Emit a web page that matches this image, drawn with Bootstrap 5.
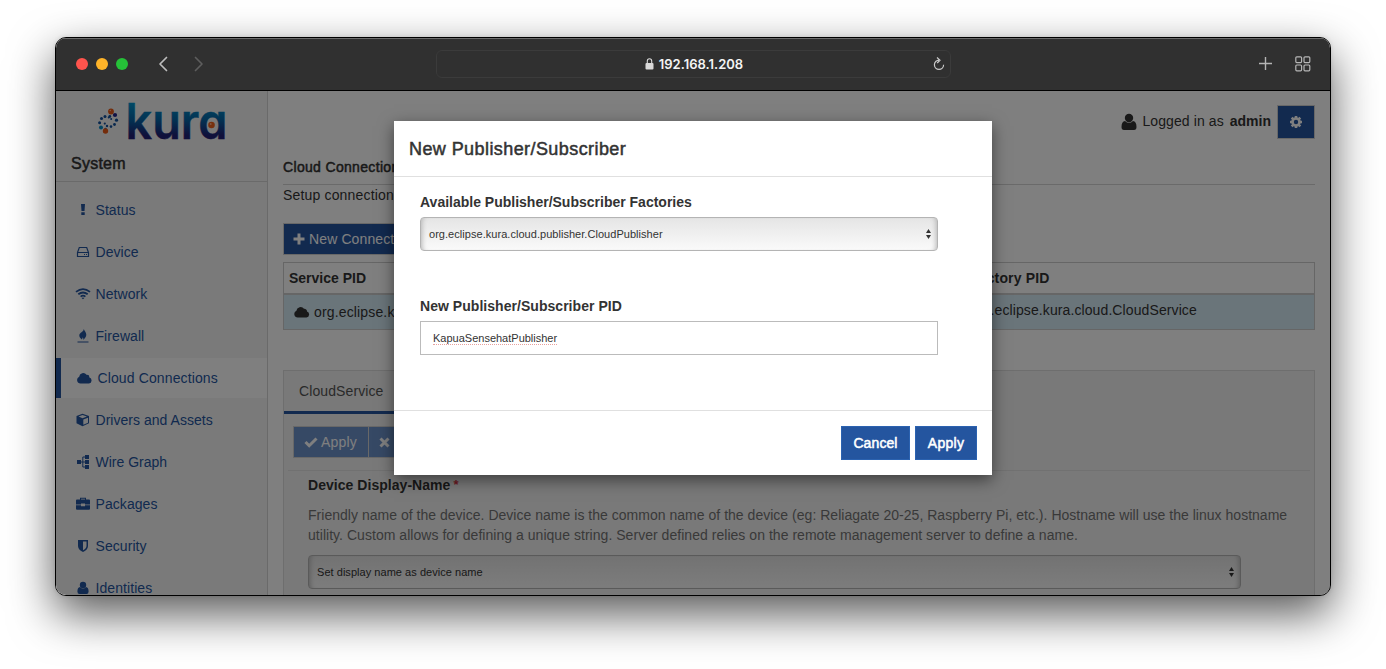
<!DOCTYPE html>
<html lang="en">
<head>
<meta charset="utf-8">
<meta name="viewport" content="width=device-width, initial-scale=1">
<title>Kura - Cloud Connections</title>
<link href="https://cdn.jsdelivr.net/npm/bootstrap@5.3.0/dist/css/bootstrap.min.css" rel="stylesheet">
<style>
  :root { --kura-blue: #24559f; }
  body { background: #fff; font: 14px/20px "Liberation Sans", Arial, sans-serif; color: #333; height: 669px; overflow: hidden; padding: 37px 55px; }
  svg { display: block; flex: none; }
  .medium { -webkit-text-stroke: .5px currentColor; }
  .window { height: 559px; border: 1px solid #000; border-radius: 11px; overflow: hidden; background: #fff; box-shadow: 0 18px 46px rgba(0,0,0,.66), 0 0 4px rgba(0,0,0,.12); }
  .titlebar { height: 53px; background: #303030; border-bottom: 1px solid #000; box-shadow: inset 0 1px 0 #6c6c6c; padding: 0 19px 0 20px; }
  .dot { width: 12px; height: 12px; }
  .address { width: 515px; height: 28px; border: 1px solid #3b3b3b; border-radius: 6px; color: #f4f4f4; font: 600 13px/26px Inter, sans-serif; }
  .app { height: 504px; }
  .sidebar { width: 212px; background: #f4f4f4; border-right: 1px solid #d5d5d5; }
  .brand { height: 91px; border-bottom: 1px solid #d5d5d5; }
  .brand h2 { font-size: 16px; line-height: 24px; letter-spacing: .25px; padding-left: 15px; }
  .side-link { height: 40px; margin-bottom: 2px; color: var(--kura-blue); padding-left: 20px; gap: 5.5px; letter-spacing: .07px; }
  .side-link.active { background: #fff; border-left: 5px solid var(--kura-blue); padding-left: 16px; letter-spacing: .12px; }
  .content-area { padding: 14px 15px 0; min-width: 0; }
  .kbtn { background: var(--kura-blue); color: #fff; border: 1px solid #d0d0d0; border-radius: 0; font-size: 14px; line-height: 20px; padding: 0 10px; }
  .kbtn:hover { background: #1c467f; color: #fff; }
  .rule { border-bottom: 1px solid #d5d5d5; }
  .pid-table { border: 1px solid #ccc; height: 68px; }
  .pid-table .thead-row { height: 32px; border-bottom: 2px solid #ccc; font-weight: 700; }
  .pid-table .trow { height: 34px; background: #d5eaf5; }
  .pid-col { width: 685px; padding-left: 5px; }
  .panel { border: 1px solid #ddd; border-bottom: 0; background: #f2f2f2; height: 226px; }
  .tab-item { height: 43px; width: 117px; border-bottom: 3px solid var(--kura-blue); padding: 10px 15px; color: #555; letter-spacing: .1px; }
  .kselect { height: 34px; border: 1px solid #b4b4b4; border-radius: 4px; font-size: 11px; background: linear-gradient(#e5e5e5, #fafafa); box-shadow: inset 5px 0 5px -4px #b5b5b5, inset -5px 0 5px -4px #b5b5b5; padding: 0 5px 0 8px; color: #333; letter-spacing: .04px; }
  .dim { background: rgba(0,0,0,.5); inset: 0; }
  .dialog { width: 598px; height: 354px; left: 338px; top: 30px; background: #fff; box-shadow: 0 5px 15px rgba(0,0,0,.5); }
  .dialog header { height: 56px; border-bottom: 1px solid #e0e0e0; padding: 18px 15px; font-size: 18px; letter-spacing: .42px; }
  .dialog main { height: 233px; padding: 15px 54px 0 26px; }
  .dialog label { line-height: 20px; font-weight: 700; }
  .dialog footer { height: 65px; border-top: 1px solid #e0e0e0; padding: 15px; gap: 5px; }
  .dialog .kbtn { height: 34px; border-color: #2b62b0; padding: 0; }
  .pid-field { height: 34px; border: 1px solid #bbb; font-size: 11px; padding: 0 12px; color: #333; }
  .spell { border-bottom: 1px dotted #e7a3a0; line-height: 12px; }
</style>
</head>
<body>
<div class="window">
  <div class="titlebar d-flex align-items-center justify-content-between">
    <div class="d-flex align-items-center" style="width:360px">
      <span class="dot rounded-circle me-2" style="background:#ff544d"></span>
      <span class="dot rounded-circle me-2" style="background:#ffb429"></span>
      <span class="dot rounded-circle" style="background:#25c138"></span>
      <svg class="ms-4" width="60" height="18" fill="none" stroke-width="1.700" stroke-linecap="round" stroke-linejoin="round"><path d="M20 2.500 13.500 9l6.500 6.500" transform="translate(-5.500)" stroke="#bdbdbd"/><path d="m48.500 2.500 6.500 6.500-6.500 6.500" transform="translate(-5)" stroke="#5d5d5d"/></svg>
    </div>
    <div class="address d-flex align-items-center ps-1">
      <span class="flex-grow-1 d-flex justify-content-center align-items-center" style="padding-left:14px;gap:5px">
        <svg width="9" height="12" viewBox="0 0 9 12"><rect x=".5" y="5" width="8" height="6.500" rx="1" fill="#d9d9d9"/><path d="M2.300 5V3a2.200 2.200 0 0 1 4.400 0v2" fill="none" stroke="#d9d9d9" stroke-width="1.100"/></svg>192.168.1.208
      </span>
      <svg width="12" height="14" viewBox="0 0 12 14" style="margin-right:5px" fill="none" stroke="#c9c9c9" stroke-width="1.200"><path d="M6 3.200A4.600 4.600 0 1 0 10.600 7.800M4 .5l3 2.700-2.800 2.800"/></svg>
    </div>
    <div class="d-flex align-items-center justify-content-end" style="width:360px;gap:22px;padding-bottom:1px">
      <svg width="15" height="15" stroke="#b5b5b5" stroke-width="1.400"><path d="M7.500 1v13M1 7.500h13"/></svg>
      <svg width="16" height="16" fill="none" stroke="#b5b5b5" stroke-width="1.200"><rect x=".8" y=".8" width="5.800" height="5.800" rx="1"/><rect x="9" y=".8" width="5.800" height="5.800" rx="1"/><rect x=".8" y="9" width="5.800" height="5.800" rx="1"/><rect x="9" y="9" width="5.800" height="5.800" rx="1"/></svg>
    </div>
  </div>

  <div class="app d-flex position-relative overflow-hidden">
    <nav class="sidebar flex-shrink-0">
      <div class="brand">
        <svg width="180" height="61" viewBox="56 91 180 61" role="img" aria-label="kura">
          <defs><linearGradient id="kg" gradientUnits="userSpaceOnUse" x1="0" y1="101" x2="0" y2="139"><stop offset="0" stop-color="#0098d0"/><stop offset=".5" stop-color="#0664a5"/><stop offset=".9" stop-color="#202176"/></linearGradient></defs>
          <g fill="#12509c"><circle cx="115" cy="115" r="2.100" fill="#24248a"/><circle cx="109.800" cy="116.500" r="1.400"/><circle cx="105" cy="116.500" r="1.500"/><circle cx="101.500" cy="118.500" r="1.500"/><circle cx="99.600" cy="122.800" r="1.500"/><circle cx="101" cy="127.500" r="2" fill="#0789c4"/><circle cx="104.800" cy="123.600" r="1.100"/><circle cx="107" cy="126" r="1.200"/><circle cx="111" cy="126.600" r="1.300"/><circle cx="114.500" cy="124.500" r="1.400"/><circle cx="116.500" cy="120.200" r="1.600"/><circle cx="108.700" cy="117.500" r="1"/><circle cx="111.200" cy="119" r="1"/><circle cx="105.500" cy="129" r="1.200"/></g>
          <g fill="#e95a18"><circle cx="111" cy="111.500" r="2.900"/><circle cx="105.500" cy="131" r="2.700"/><circle cx="110.300" cy="110.500" r=".8" fill="#ffb08a"/></g>
          <text x="125.500" y="139" font-family="Inter, sans-serif" font-weight="600" font-size="49" textLength="102" lengthAdjust="spacingAndGlyphs" style="font-feature-settings:'cv11'" fill="url(#kg)" stroke="url(#kg)" stroke-width=".4">kura</text>
          <circle cx="211.500" cy="125" r="3.300" fill="#ee601c"/><circle cx="210.700" cy="124" r=".9" fill="#ffb08a"/>
        </svg>
        <h2 class="medium mb-0">System</h2>
      </div>
      <div class="pt-2">
        <a class="side-link d-flex align-items-center text-decoration-none"><svg width="14" height="14" fill="currentColor"><path d="M5 1h4l-.5 7h-3zM5.300 9.300h3.400V12H5.300z"/></svg>Status</a>
        <a class="side-link d-flex align-items-center text-decoration-none"><svg width="14" height="14" fill="none" stroke="currentColor" stroke-width="1.200"><path d="M1.500 7.500 3.300 2.500h7.400l1.800 5v4h-11zM1.500 7.500h11"/><path d="M8 9.500h1M10 9.500h1"/></svg>Device</a>
        <a class="side-link d-flex align-items-center text-decoration-none"><svg width="14" height="14" viewBox="0 0 14 14" overflow="visible" fill="none" stroke="currentColor" stroke-width="1.800"><path d="M0 4.900q7-5.600 14 0M2.300 7.300q4.700-3.600 9.400 0M4.600 9.600q2.400-1.800 4.800 0"/><path d="m5.600 10.900 1.400 1.400 1.400-1.400q-1.400-1-2.800 0z" fill="currentColor" stroke="none"/></svg>Network</a>
        <a class="side-link d-flex align-items-center text-decoration-none"><svg width="14" height="14" fill="currentColor"><path d="M7.800 0c.4 2 2.500 3 2.500 5.800 0 2.300-1.500 3.400-3 5.200.3-1.500-.2-2.200-.9-2.500.1 1-.2 1.500-.5 2C4.400 9.200 3 8 3.300 6 3.700 3.500 7.500 3.100 7.800 0zM1.500 12.500h11v1h-11z"/></svg>Firewall</a>
        <a class="side-link active d-flex align-items-center text-decoration-none"><svg width="15" height="14" fill="currentColor"><path d="M3.500 12.500a3.500 3.500 0 0 1-1.300-6.700A4 4 0 0 1 9.500 3.800 2.600 2.600 0 0 1 12.400 6.500 3.100 3.100 0 0 1 12 12.500z"/></svg>Cloud Connections</a>
        <a class="side-link d-flex align-items-center text-decoration-none" style="letter-spacing:.03px"><svg width="14" height="14"><path d="M6.500.8l6.500 2.300v7.200l-6.500 3-6-3V3.100z" fill="currentColor"/><path d="m2.500 3.600 4-1.700 4.500 1.700-4.500 1.700zM7.300 6.500l4.700-1.700v4.900l-4.700 2z" fill="#f4f4f4"/></svg>Drivers and Assets</a>
        <a class="side-link d-flex align-items-center text-decoration-none" style="letter-spacing:0"><svg width="14" height="14" fill="currentColor"><path d="M1 5h4v4H1zM9 0h4v4H9zM9 5h4v4H9zM9 10h4v4H9z"/><path d="M5 7h4M9 2H6.800v10H9" stroke="currentColor" fill="none"/></svg>Wire Graph</a>
        <a class="side-link d-flex align-items-center text-decoration-none"><svg width="14" height="14" fill="currentColor"><path d="M4 2.500V.8h6v1.700h3q1 0 1 1V7.500H9v-1H5v1H0v-4q0-1 1-1zM5 2.500h4v-.7H5zM0 8.200h5v1.100h4V8.200h5v3.500q0 1-1 1H1q-1 0-1-1z" fill-rule="evenodd"/></svg>Packages</a>
        <a class="side-link d-flex align-items-center text-decoration-none"><svg width="14" height="14"><path d="M2 1h10v6c0 3-2.500 4.800-5 6-2.500-1.200-5-3-5-6z" fill="currentColor"/><path d="M7 2.500h3.500V7c0 2-1.700 3.300-3.500 4.300z" fill="#f4f4f4"/></svg>Security</a>
        <a class="side-link d-flex align-items-center text-decoration-none"><svg width="14" height="14" fill="currentColor"><circle cx="7" cy="4" r="3.200"/><path d="M4 6q3 3 6 0 2.600.3 2.600 4.500Q12.600 13 10.500 13h-7Q1.400 13 1.400 10.500 1.400 6.300 4 6z"/></svg>Identities</a>
      </div>
    </nav>

    <section class="content-area flex-grow-1">
      <div class="d-flex justify-content-end align-items-center" style="height:34px">
        <svg width="16" height="18" class="me-1" viewBox="0 0 16 18" fill="#333"><circle cx="8" cy="5" r="4.200"/><path d="M4 8q4 3.700 8 0 3.500.4 3.500 6 0 3-2.500 3H3q-2.500 0-2.500-3Q.5 8.400 4 8z"/></svg>
        <span style="letter-spacing:.1px;margin:-2px 0 0 1px">Logged in as</span><strong style="margin:-2px 0 0 6px">admin</strong>
        <button class="kbtn h-100" aria-label="Settings" style="width:38px;padding:0 11px;margin-left:6px"><svg width="14" height="14" viewBox="0 0 14 14"><circle cx="7" cy="7" r="3.500" fill="none" stroke="#fff" stroke-width="2.600"/><path d="M7 1v2M7 11v2M1 7h2M11 7h2M2.700 2.700l1.500 1.500M9.800 9.800l1.500 1.500M11.300 2.700 9.800 4.200M4.200 9.800l-1.500 1.500" stroke="#fff" stroke-width="2.600"/></svg></button>
      </div>
      <div class="medium rule" style="margin-top:18px;height:28px;letter-spacing:.33px">Cloud Connections</div>
      <div style="height:38px;letter-spacing:.17px">Setup connections</div>
      <button class="kbtn d-flex align-items-center" style="height:32px;gap:4px;padding-left:9px;letter-spacing:.12px"><svg width="12" height="12"><path d="M4.500.5h3v4h4v3h-4v4h-3v-4h-4v-3h4z" fill="#fff"/></svg>New Connection</button>
      <div class="pid-table" style="margin-top:7px">
        <div class="thead-row d-flex align-items-center"><span class="pid-col">Service PID</span><span style="letter-spacing:.15px;padding-left:1px">Factory PID</span></div>
        <div class="trow d-flex align-items-center">
          <span class="pid-col d-flex align-items-center" style="gap:4px;padding-left:10px;letter-spacing:.15px"><svg width="16" height="14" fill="#333"><path d="M3.700 12.500a3.500 3.500 0 0 1-1.300-6.700A4.200 4.200 0 0 1 10 3.800 2.600 2.600 0 0 1 13 6.500a3.100 3.100 0 0 1-.5 6z"/></svg>org.eclipse.kura</span>
          <span style="letter-spacing:.1px;padding:0 0 4px 1px">org.eclipse.kura.cloud.CloudService</span>
        </div>
      </div>
      <div class="panel" style="margin-top:40px">
        <div class="tab-item">CloudService</div>
        <div class="d-flex rule" style="margin:12px 4px 0;padding:0 5px 12px;border-color:#e2e2e2">
          <button class="kbtn d-flex align-items-center" style="width:76px;height:32px;gap:3px;background:#6d92cb;letter-spacing:.2px"><svg width="14" height="14"><path d="m1.500 7 3.700 3.700L12.500 3.500" fill="none" stroke="#fff" stroke-width="3"/></svg>Apply</button>
          <button class="kbtn d-flex align-items-center" style="height:32px;margin-left:-1px;gap:5px;background:#6d92cb"><svg width="11" height="12"><path d="m1.500 2.500 8 8m0-8-8 8" stroke="#fff" stroke-width="3"/></svg>Reset</button>
        </div>
        <div style="padding:4px 24px 0">
          <div class="d-flex"><strong style="letter-spacing:.04px">Device Display-Name</strong><span class="text-danger fw-bold" style="font-size:13px;line-height:20px;padding-left:3px">*</span></div>
          <div class="text-nowrap" style="margin:10px 0;color:#737373;letter-spacing:.022px">Friendly name of the device. Device name is the common name of the device (eg: Reliagate 20-25, Raspberry Pi, etc.). Hostname will use the linux hostname<br><span style="letter-spacing:.036px">utility. Custom allows for defining a unique string. Server defined relies on the remote management server to define a name.</span></div>
          <div class="kselect d-flex align-items-center justify-content-between" style="width:933px">Set display name as device name<svg width="7" height="12" fill="#333"><path d="M1 5h5L3.500 1zM1 7h5l-2.500 4z"/></svg></div>
        </div>
      </div>
    </section>

    <div class="dim position-absolute"></div>
    <div class="dialog position-absolute" role="dialog">
      <header class="medium">New Publisher/Subscriber</header>
      <main>
        <label>Available Publisher/Subscriber Factories</label>
        <div class="kselect d-flex align-items-center justify-content-between" style="margin-top:5px">org.eclipse.kura.cloud.publisher.CloudPublisher<svg width="7" height="12" fill="#333"><path d="M1 5h5L3.500 1zM1 7h5l-2.500 4z"/></svg></div>
        <label style="margin-top:45px;letter-spacing:.04px">New Publisher/Subscriber PID</label>
        <div class="pid-field d-flex align-items-center" style="margin-top:5px"><span class="spell">KapuaSensehatPublisher</span></div>
      </main>
      <footer class="d-flex justify-content-end"><button class="kbtn medium" style="width:69px;letter-spacing:.1px">Cancel</button><button class="kbtn medium" style="width:62px;letter-spacing:.25px">Apply</button></footer>
    </div>
  </div>
</div>
<script src="https://cdn.jsdelivr.net/npm/bootstrap@5.3.0/dist/js/bootstrap.bundle.min.js"></script>
</body>
</html>
